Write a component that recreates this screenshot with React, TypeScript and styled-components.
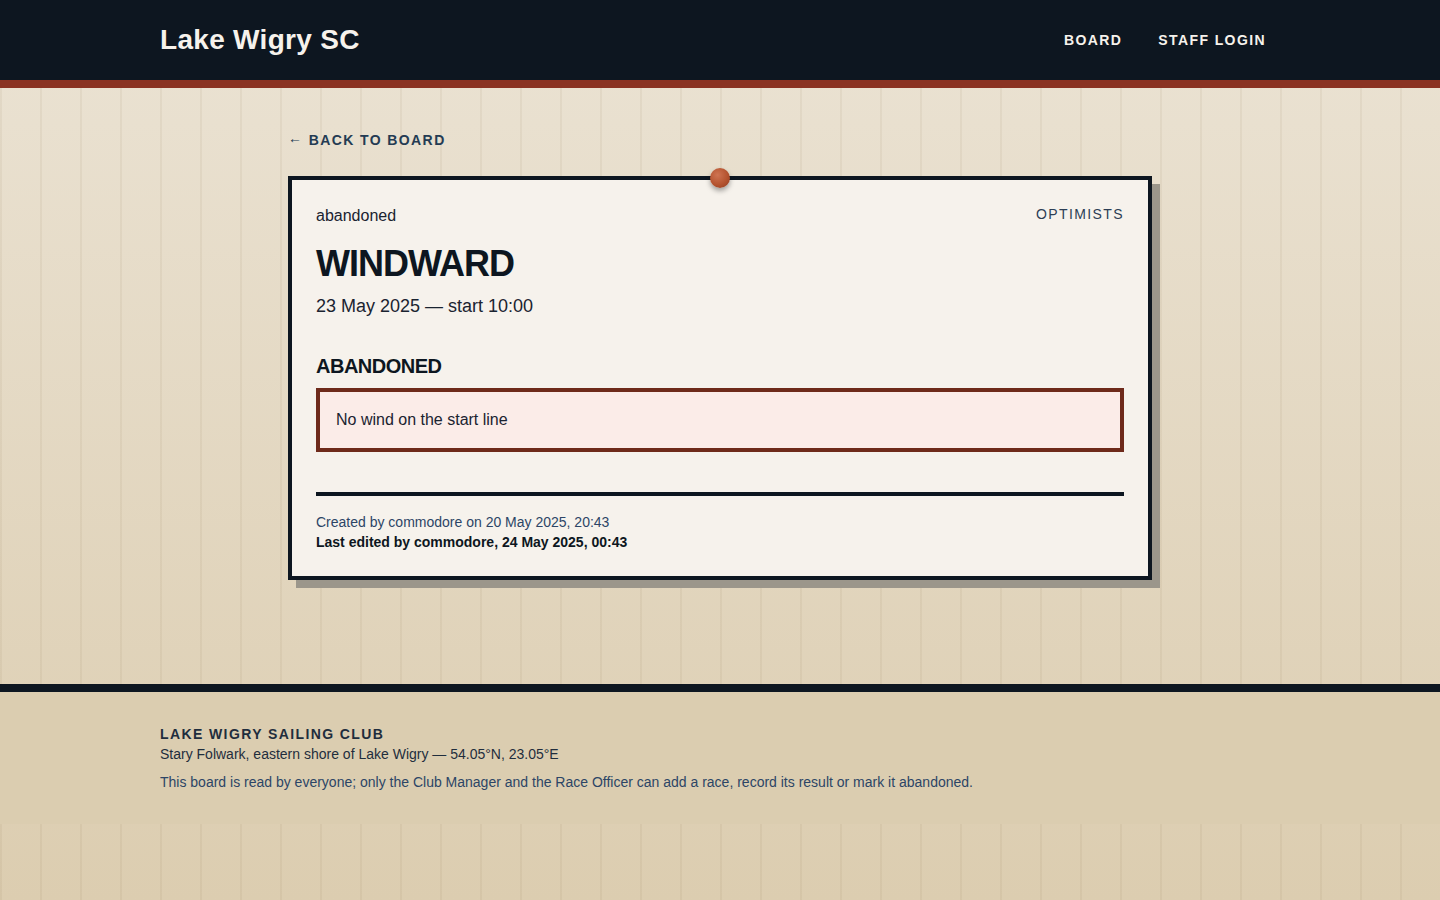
import styled, { createGlobalStyle } from 'styled-components';

const GlobalStyle = createGlobalStyle`
  html {
    min-height: 100%;
    background-color: #e3d8c2;
    background-image:
      repeating-linear-gradient(90deg, rgba(120, 95, 55, 0.07) 0 2px, transparent 2px 40px),
      linear-gradient(180deg, #ebe3d4 0%, #dccdb0 100%);
  }
  body {
    margin: 0;
    font-family: "Liberation Sans", Arial, sans-serif;
    color: #0d1620;
  }
  * {
    box-sizing: border-box;
  }
`;

const Header = styled.header`
  background: #0d1620;
  border-bottom: 8px solid #8a3322;
`;

const HeaderInner = styled.div`
  width: 1120px;
  height: 80px;
  margin: 0 auto;
  display: flex;
  align-items: center;
  justify-content: space-between;
`;

const Brand = styled.a`
  font-size: 28px;
  font-weight: 700;
  letter-spacing: 0.3px;
  color: #f6f2ec;
  text-decoration: none;
`;

const Nav = styled.nav`
  display: flex;
  gap: 8px;
`;

const NavLink = styled.a`
  padding: 8px 14px;
  font-size: 14px;
  font-weight: 700;
  letter-spacing: 0.1em;
  color: #f6f2ec;
  text-decoration: none;
  text-transform: uppercase;
`;

const Main = styled.main`
  width: 864px;
  margin: 0 auto;
  padding: 42px 0 104px;
`;

const BackLink = styled.a`
  display: block;
  margin-bottom: 26px;
  font-size: 14px;
  line-height: 20px;
  font-weight: 700;
  letter-spacing: 0.1em;
  color: #243b53;
  text-decoration: none;
`;

const Arrow = styled.span`
  display: inline-block;
  transform: translateY(-2px);
`;

const Card = styled.article`
  position: relative;
  background: #f6f2ec;
  border: 4px solid #0d1620;
  box-shadow: 8px 8px 0 #9b968b;
  padding: 24px;
`;

const Pin = styled.span`
  position: absolute;
  top: -12px;
  left: 50%;
  width: 20px;
  height: 20px;
  margin-left: -10px;
  border-radius: 50%;
  background: radial-gradient(circle at 38% 35%, #cf7452 0%, #b4532f 55%, #8c3a20 100%);
  box-shadow: 0 3px 5px rgba(0, 0, 0, 0.35);
`;

const TopRow = styled.div`
  display: flex;
  justify-content: space-between;
  align-items: flex-start;
  line-height: 24px;
`;

const Status = styled.span`
  font-size: 16px;
  color: #1a2330;
`;

const Fleet = styled.span`
  font-size: 14px;
  line-height: 20px;
  letter-spacing: 0.1em;
  color: #2c3e55;
`;

const Title = styled.h1`
  margin: 14px 0 0;
  font-size: 36px;
  line-height: 1.2;
  font-weight: 700;
  letter-spacing: -1px;
  color: #0d1620;
`;

const DateLine = styled.p`
  margin: 8px 0 0;
  font-size: 18px;
  line-height: 27px;
  color: #1a2330;
`;

const SectionTitle = styled.h2`
  margin: 34px 0 10px;
  font-size: 20px;
  line-height: 24px;
  font-weight: 700;
  letter-spacing: -0.5px;
  color: #0d1620;
`;

const Notice = styled.div<{ $tone: 'abandoned' | 'info' }>`
  border: 4px solid ${(p) => (p.$tone === 'abandoned' ? '#6e2a1a' : '#243b53')};
  background: ${(p) => (p.$tone === 'abandoned' ? '#fbece8' : '#eef2f6')};
  padding: 16px;
  font-size: 16px;
  line-height: 24px;
  color: #1a2330;
`;

const Meta = styled.footer`
  margin-top: 40px;
  border-top: 4px solid #0d1620;
  padding-top: 16px;
  font-size: 14px;
  line-height: 20px;
`;

const MetaLine = styled.div<{ $strong?: boolean }>`
  color: ${(p) => (p.$strong ? '#0d1620' : '#2c4566')};
  font-weight: ${(p) => (p.$strong ? 700 : 400)};
`;

const SiteFooter = styled.footer`
  background: #dbcdb0;
  border-top: 8px solid #0d1620;
`;

const FooterInner = styled.div`
  width: 1120px;
  margin: 0 auto;
  padding: 32px 0;
  font-size: 14px;
  line-height: 20px;
`;

const ClubName = styled.div`
  font-weight: 700;
  letter-spacing: 0.1em;
  color: #1f2d3d;
`;

const Address = styled.div`
  color: #1f2d3d;
`;

const Policy = styled.p`
  margin: 8px 0 0;
  color: #2c4566;
`;

export default function App() {
  return (
    <>
      <GlobalStyle />
      <Header>
        <HeaderInner>
          <Brand href="#">Lake Wigry SC</Brand>
          <Nav>
            <NavLink href="#">Board</NavLink>
            <NavLink href="#">Staff login</NavLink>
          </Nav>
        </HeaderInner>
      </Header>
      <Main>
        <BackLink href="#">
          <Arrow>←</Arrow> BACK TO BOARD
        </BackLink>
        <Card>
          <Pin />
          <TopRow>
            <Status>abandoned</Status>
            <Fleet>OPTIMISTS</Fleet>
          </TopRow>
          <Title>WINDWARD</Title>
          <DateLine>23 May 2025 — start 10:00</DateLine>
          <SectionTitle>ABANDONED</SectionTitle>
          <Notice $tone="abandoned">No wind on the start line</Notice>
          <Meta>
            <MetaLine>Created by commodore on 20 May 2025, 20:43</MetaLine>
            <MetaLine $strong>Last edited by commodore, 24 May 2025, 00:43</MetaLine>
          </Meta>
        </Card>
      </Main>
      <SiteFooter>
        <FooterInner>
          <ClubName>LAKE WIGRY SAILING CLUB</ClubName>
          <Address>Stary Folwark, eastern shore of Lake Wigry — 54.05°N, 23.05°E</Address>
          <Policy>
            This board is read by everyone; only the Club Manager and the Race Officer can add a race,
            record its result or mark it abandoned.
          </Policy>
        </FooterInner>
      </SiteFooter>
    </>
  );
}
